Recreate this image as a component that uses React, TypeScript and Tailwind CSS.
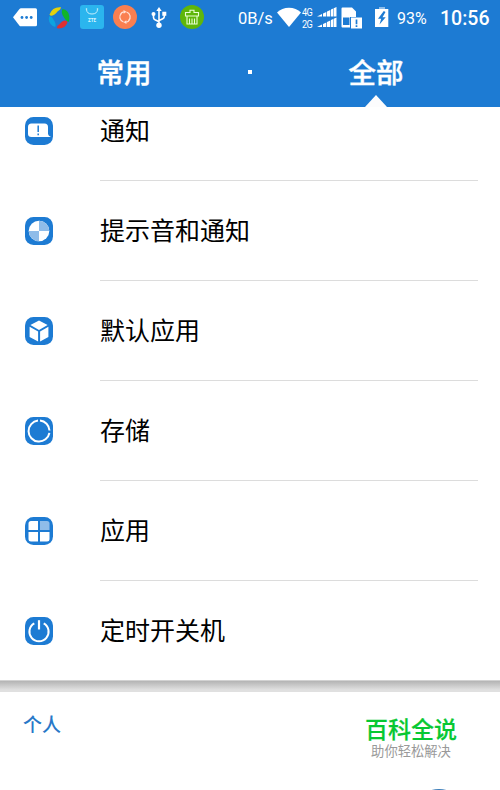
import React from 'react';

const items = [
  { label: '通知', icon: <NoticeIcon /> },
  { label: '提示音和通知', icon: <SoundIcon /> },
  { label: '默认应用', icon: <DefaultAppIcon /> },
  { label: '存储', icon: <StorageIcon /> },
  { label: '应用', icon: <AppsIcon /> },
  { label: '定时开关机', icon: <PowerIcon /> },
];

function Tile({ children }: { children: React.ReactNode }) {
  return (
    <svg width="28" height="28" viewBox="0 0 28 28" className="shrink-0">
      <rect width="28" height="28" rx="8.5" fill="#1d7bd3" />
      {children}
    </svg>
  );
}

function NoticeIcon() {
  return (
    <Tile>
      <path d="M6.500 6.500h13q3.500 0 3.500 3.500v7q.3 2.200 3 3H6.500Q3 20 3 17v-7q0-3.500 3.500-3.500z" fill="#fff" />
      <path d="M13.200 8.500v6.500M13.200 16.500v1.800" stroke="#1d7bd3" strokeWidth="1.500" />
    </Tile>
  );
}

function SoundIcon() {
  return (
    <Tile>
      <circle cx="14" cy="14" r="10.300" fill="#fff" />
      <path d="M14 14V3.700A10.300 10.300 0 0 1 24.300 14zM14 14v10.300A10.300 10.300 0 0 1 3.700 14z" fill="#8fbce9" />
    </Tile>
  );
}

function DefaultAppIcon() {
  return (
    <Tile>
      <path d="M14 3.500l8.600 4.500L14 12.900 5.400 8zM4.600 9.700l8.500 4.900v9.900l-8.500-4.400zM23.400 9.700l-8.300 4.900v9.900l8.300-4.400z" fill="#fff" />
    </Tile>
  );
}

function StorageIcon() {
  return (
    <Tile>
      <path d="M15 3.600A10.500 10.500 0 0 1 24.500 13.500M24.400 15.800A10.500 10.500 0 1 1 13 3.600" fill="none" stroke="#fff" strokeWidth="2" />
    </Tile>
  );
}

function AppsIcon() {
  return (
    <Tile>
      <path d="M13 4v9H3.500V6.500Q3.500 4 6 4zM3.500 15H13v9.500H6Q3.500 24.500 3.500 22zM15 15h9.500v7q0 2.500-2.500 2.500h-7z" fill="#fff" />
      <path d="M15 4h7q2.500 0 2.500 2.500V13H15z" fill="#8fbce9" />
    </Tile>
  );
}

function PowerIcon() {
  return (
    <Tile>
      <path d="M9.300 6.400a9.600 9.600 0 1 0 9.400 0" fill="none" stroke="#fff" strokeWidth="2" />
      <path d="M14 3.200v9.300" stroke="#fff" strokeWidth="2.200" />
    </Tile>
  );
}

function StatusBar() {
  return (
    <div className="flex h-9 items-start text-white">
      {/* Notifications */}
      <svg width="24" height="20" viewBox="0 0 24 20" className="mt-[7px] ml-[13px] shrink-0">
        <path d="M0 10.300L6.500 1.900Q7 1.300 8 1.300h14.500Q24 1.300 24 2.800v15q0 1.500-1.500 1.500H8q-1 0-1.500-.500z" fill="#fff" />
        <circle cx="9" cy="10.500" r="1.400" fill="#1d7bd3" />
        <circle cx="13.600" cy="10.500" r="1.400" fill="#1d7bd3" />
        <circle cx="18.200" cy="10.500" r="1.400" fill="#1d7bd3" />
      </svg>
      <svg width="22" height="22" viewBox="0 0 22 22" className="mt-[7px] ml-[11px] shrink-0">
        <path d="M1.500 7.500Q4.500-.500 13 .300 13.300 2.500 9.500 4.500 6.500 8.500 3.800 8.700 2 8.800 1.500 7.500z" fill="#e4d10d" />
        <path d="M14.500 2Q20.500 3 21.300 9q.3 5.500-1 6-2.500-1-4.300-4.500Q12.500 6 14.500 2z" fill="#10b429" />
        <path d="M19.500 15.500Q17 22.300 9 21.300 8.500 19 11.500 17.300 14 13.500 17 13.500 19.500 13.500 19.500 15.500z" fill="#df3033" />
        <path d="M1 9.500Q3.500 8.500 5.500 12.500q3 4 1.800 7.500Q1.500 18.500.800 12.500z" fill="#0da3df" />
      </svg>
      <svg width="24" height="24" viewBox="0 0 24 24" className="mt-[5px] ml-[10px] shrink-0">
        <rect width="24" height="24" rx="3" fill="#2bb5ee" />
        <path d="M6.500 4.500q.300 4.500 5.500 4.500t5.500-4.500" fill="none" stroke="#c5eefc" strokeWidth="1" />
        <circle cx="6.500" cy="4" r=".8" fill="#d8f5fe" />
        <circle cx="17.500" cy="4" r=".8" fill="#d8f5fe" />
        <text x="12" y="17" textAnchor="middle" fontSize="4.500" fontWeight="bold" fontFamily="Roboto" fill="#d8f5fe">ZTE</text>
      </svg>
      <svg width="24" height="24" viewBox="0 0 24 24" className="mt-[5px] ml-[9px] shrink-0">
        <circle cx="12" cy="12" r="12" fill="#fa7f50" />
        <path d="M10.500 17A5.200 5.200 0 0 1 8.500 8.200M13.500 7a5.200 5.200 0 0 1 2 8.800M10.800 6.800A5 5 0 0 0 7.500 9M13.200 17.200a5 5 0 0 0 3.300-2.200" fill="none" stroke="#ffe2d7" strokeWidth="1.200" />
        <path d="M10.500 5l3 1.800-2.800 1.900zM13.500 19l-3-1.800 2.800-1.900z" fill="#ffe2d7" />
      </svg>
      <svg width="16" height="22" viewBox="0 0 16 22" className="mt-[7px] ml-[14px] shrink-0">
        <path d="M8 3v15M2.500 7v3.500Q2.500 12 4 12.800l4 2M13.300 7v2.500q0 1.500-1.500 2.200L8 13.500" fill="none" stroke="#fff" strokeWidth="1.600" />
        <path d="M8 0l2.700 4H5.300zM11.300 4.700h4v4h-4z" fill="#fff" />
        <circle cx="2.500" cy="7" r="2" fill="#fff" />
        <circle cx="8" cy="18.300" r="2.700" fill="#fff" />
      </svg>
      <svg width="24" height="24" viewBox="0 0 24 24" className="mt-[5px] ml-[13px] shrink-0">
        <circle cx="12" cy="12" r="12" fill="#5fb60b" />
        <path d="M5.500 11V7.500H10V5.200h4v2.300h4.500V11zM7 11v8h10v-8M9.500 13.500V19M12 13.500V19M14.500 13.500V19" fill="none" stroke="#e9ffd4" strokeWidth="1.100" />
      </svg>

      {/* Network and power */}
      <span className="mt-[7px] ml-[34px] w-[38px] text-[16.500px] leading-6 whitespace-nowrap">0B/s</span>
      <svg width="24" height="20" viewBox="0 0 24 20" className="mt-[7px] ml-[1px] shrink-0">
        <path d="M0 5.500C6-1 18-1 24 5.500L12 20z" fill="#fff" />
      </svg>
      <div className="mt-[7px] ml-[1px] w-[15px] origin-left scale-x-[0.920] text-[10px] leading-[12px] tracking-[-0.600px]">
        <div>4G</div>
        <div>2G</div>
      </div>
      <svg width="20" height="21" viewBox="0 0 20 21" className="mt-[7px] shrink-0">
        <path d="M0 9.500L5 7v2.500zM6 6.500L9.300 5v4.500H6zM10 4.500L13.300 3v6.500H10zM14 2.500l2.200-.9v7.900H14zM16.700 1.200L19.500 0v9.500h-2.800z" fill="#fff" />
        <path d="M0 20L5 17.500V20zM6 17l3.300-1.500V20H6zM10 15l3.300-1.500V20H10zM14 13l2.200-.9V20H14zM16.700 11.700l2.800-1.200V20h-2.800z" fill="#fff" />
      </svg>
      <svg width="22" height="22" viewBox="0 0 22 22" className="mt-[7px] ml-[4px] shrink-0">
        <path d="M1.500.500H11L15 4.500V10H9v10.500H1.500q-1 0-1-1v-18q0-1 1-1z" fill="#fff" />
        <path d="M2 10.500h6.500V18H2z" fill="#1d7bd3" />
        <path d="M10 10.500h11v11H10z" fill="#fff" />
        <path d="M15.500 12.500v4.700M15.500 18.200v1.800" stroke="#1d7bd3" strokeWidth="1.700" />
      </svg>
      <svg width="14" height="20" viewBox="0 0 14 20" className="mt-[7px] ml-[12px] shrink-0">
        <path d="M4 0h6v2H4z" fill="#8ebde9" />
        <path d="M0 2h13.300v18H0z" fill="#fff" />
        <path d="M8.800 4L3 11.800h3.200L4.500 17.500l6.200-7.300H7.500L10.500 5z" fill="#1d7bd3" />
      </svg>
      <span className="mt-[7px] ml-[8px] w-[43px] text-base leading-6">93%</span>
      <span className="mt-[7px] text-[19.500px] leading-6 font-medium">10:56</span>
    </div>
  );
}

export default function App() {
  return (
    <div className="flex h-[790px] w-[500px] flex-col overflow-hidden bg-white font-['Roboto','Noto_Sans_CJK_SC',sans-serif]">
      <header className="relative h-[107px] shrink-0 bg-[#1d7bd3]">
        <StatusBar />
        <nav className="flex h-[71px] items-center text-[27.500px] font-medium text-white [-webkit-text-stroke:0.4px_white]">
          <div className="flex-1 pt-[4px] text-center">常用</div>
          <div className="size-1 bg-white" />
          <div className="flex-1 pt-[4px] text-center">全部</div>
        </nav>
        <svg width="22" height="12" viewBox="0 0 22 12" className="absolute bottom-0 left-[365px]">
          <path d="M11 0l11 12H0z" fill="#fcfcfd" />
        </svg>
      </header>

      <main className="h-[573px] shrink-0 overflow-hidden">
        <ul className="-mt-[26px]">
          {items.map((item) => (
            <li key={item.label} className="flex h-[100px] items-center pl-[25px]">
              {item.icon}
              <div className="ml-[47px] flex h-full w-[378px] items-center border-b border-[#dcdcdc] pt-[2px] text-[25px] text-black">
                {item.label}
              </div>
            </li>
          ))}
        </ul>
      </main>

      <div className="h-[12px] shrink-0 border-t border-[#d2d2d2] bg-linear-to-b from-[#b4b4b4] to-[#e0e0e0] to-80%" />

      <section className="flex flex-1 justify-between pr-[43px] pl-[23px]">
        <h2 className="mt-[20px] text-[19px] leading-7 font-medium text-[#2878c8]">个人</h2>
        <div className="relative flex flex-col items-center">
          <div className="mt-[25px] text-[23px] leading-7 font-medium text-[#07c832] [-webkit-text-stroke:0.2px_#07c832]">百科全说</div>
          <div className="-mt-[3px] text-[13.300px] leading-5 text-[#999]">助你轻松解决</div>
          {/* Top of the floating button peeking in from below */}
          <div className="absolute top-[97px] left-[46px] size-14 rounded-full bg-[#3b7db9]" />
        </div>
      </section>
    </div>
  );
}
